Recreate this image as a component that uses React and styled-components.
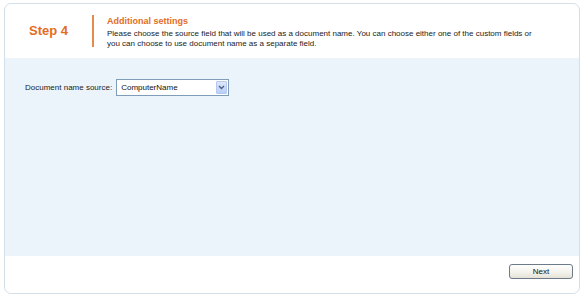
import React from "react";
import styled, { createGlobalStyle } from "styled-components";

const GlobalStyle = createGlobalStyle`
  html, body {
    margin: 0;
    padding: 0;
    background: #fff;
  }
  body {
    font-family: "Liberation Sans", Arial, sans-serif;
  }
`;

const Page = styled.div`
  padding: 3px 5px 7px 4px;
`;

const Panel = styled.div`
  display: flex;
  flex-direction: column;
  width: 576px;
  height: 291px;
  box-sizing: border-box;
  border: 1px solid #d3dfe9;
  border-radius: 7px;
  overflow: hidden;
  background: #fff;
`;

const Header = styled.div`
  display: flex;
  align-items: flex-start;
  height: 54px;
  padding-top: 11px;
  box-sizing: border-box;
`;

const StepLabel = styled.div`
  width: 63px;
  padding-left: 24px;
  line-height: 32px;
  font-size: 13px;
  font-weight: bold;
  color: #e46c1f;
`;

const Divider = styled.div`
  width: 2px;
  height: 32px;
  background: #e98a4a;
`;

const Intro = styled.div`
  margin-left: 13px;
  padding-top: 1px;
`;

const Title = styled.div`
  font-size: 9px;
  line-height: 10px;
  font-weight: bold;
  color: #e46c1f;
  margin-bottom: 3px;
`;

const Description = styled.div`
  font-size: 8px;
  line-height: 10px;
  color: #222;
  width: 428px;
`;

const Body = styled.div`
  height: 198px;
  background: #ebf3fb;
  padding: 21px 0 0 20px;
  box-sizing: border-box;
`;

const FieldRow = styled.div`
  display: flex;
  align-items: center;
  gap: 4px;
`;

const Label = styled.span`
  font-size: 8px;
  color: #222;
`;

const Select = styled.div`
  display: flex;
  align-items: center;
  width: 113px;
  height: 17px;
  box-sizing: border-box;
  border: 1px solid #7f9db9;
  background: #fff;
  padding: 1px;
`;

const SelectValue = styled.span`
  flex: 1;
  font-size: 8px;
  color: #111;
  padding-left: 3px;
`;

const ArrowBox = styled.span`
  display: flex;
  align-items: center;
  justify-content: center;
  width: 11px;
  height: 13px;
  box-sizing: border-box;
  border: 1px solid #b7c9f2;
  border-radius: 1px;
  background: linear-gradient(#dde8fd, #b9cdf7);
`;

const Footer = styled.div`
  flex: 1;
  display: flex;
  justify-content: flex-end;
  align-items: flex-start;
  padding: 8px 6px 0 0;
`;

const Button = styled.button`
  width: 64px;
  height: 15px;
  padding: 0;
  box-sizing: border-box;
  border: 1px solid #6d7a88;
  border-radius: 3px;
  background: linear-gradient(#ffffff, #f2f1ea 60%, #e4e2d6);
  font-family: "Liberation Sans", Arial, sans-serif;
  font-size: 8px;
  line-height: 12px;
  color: #111;
`;

export default function App() {
  return (
    <Page>
      <GlobalStyle />
      <Panel>
        <Header>
          <StepLabel>Step 4</StepLabel>
          <Divider />
          <Intro>
            <Title>Additional settings</Title>
            <Description>
              Please choose the source field that will be used as a document
              name. You can choose either one of the custom fields or you can
              choose to use document name as a separate field.
            </Description>
          </Intro>
        </Header>
        <Body>
          <FieldRow>
            <Label>Document name source:</Label>
            <Select>
              <SelectValue>ComputerName</SelectValue>
              <ArrowBox>
                <svg width="7" height="5" viewBox="0 0 7 5">
                  <path d="M1 1 L3.5 3.5 L6 1" stroke="#4d6185" strokeWidth="1.4" fill="none" />
                </svg>
              </ArrowBox>
            </Select>
          </FieldRow>
        </Body>
        <Footer>
          <Button>Next</Button>
        </Footer>
      </Panel>
    </Page>
  );
}
